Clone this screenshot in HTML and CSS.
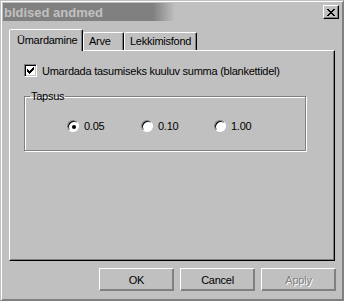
FILE: index.html
```html
<!DOCTYPE html>
<html>
<head>
<meta charset="utf-8">
<link rel="stylesheet" href="styles.css">
</head>
<body>
<div class="window">
  <div class="titlebar">
    <span class="title">bldised andmed</span>
    <span class="close">
      <svg width="8" height="7" viewBox="0 0 8 7"><path d="M0 0h2v1h1v1h2v-1h1v-1h2v1h-1v1h-1v1h-1v1h1v1h1v1h1v1h-2v-1h-1v-1h-2v1h-1v1h-2v-1h1v-1h1v-1h1v-1h-1v-1h-1v-1h-1z" fill="#000"/></svg>
    </span>
  </div>
  <div class="tabs">
    <div class="tab active">Ümardamine</div>
    <div class="tab">Arve</div>
    <div class="tab">Lekkimisfond</div>
  </div>
  <div class="panel">
    <label class="check-row">
      <span class="checkbox">
        <svg width="7" height="7" viewBox="0 0 7 7"><path d="M6 0h1v3h-1v1h-1v1h-1v1h-1v1h-1v-1h-1v-1h-1v-3h1v1h1v1h1v-1h1v-1h1v-1h1z" fill="#000"/></svg>
      </span>
      <span class="label">Umardada tasumiseks kuuluv summa (blankettidel)</span>
    </label>
    <fieldset class="group">
      <legend class="legend">Tapsus</legend>
      <div class="radios">
        <label class="radio-item">
          <span class="radio checked"></span><span class="label">0.05</span>
        </label>
        <label class="radio-item">
          <span class="radio"></span><span class="label">0.10</span>
        </label>
        <label class="radio-item">
          <span class="radio"></span><span class="label">1.00</span>
        </label>
      </div>
    </fieldset>
  </div>
  <div class="buttons">
    <div class="btn">OK</div>
    <div class="btn">Cancel</div>
    <div class="btn disabled">Apply</div>
  </div>
</div>
</body>
</html>
```
FILE: styles.css
```css
html, body {
  margin: 0;
  padding: 0;
  background: #c0c0c0;
}
.window {
  width: 344px;
  height: 301px;
  box-sizing: border-box;
  background: #c0c0c0;
  border: 1px solid;
  border-color: #c0c0c0 #808080 #808080 #c0c0c0;
  box-shadow: inset 1px 1px #fff, inset -1px -1px #808080;
  padding: 2px;
  font-family: "Liberation Sans", Arial, sans-serif;
  font-size: 11px;
  letter-spacing: -0.25px;
  color: #000;
}
.titlebar {
  height: 18px;
  display: flex;
  align-items: center;
  justify-content: space-between;
  background: linear-gradient(to right, #808080 0, #808080 150px, #c0c0c0 172px, #c0c0c0 100%);
  padding: 0 2px 0 1px;
}
.title {
  color: #c0c0c0;
  font-weight: bold;
  font-size: 13px;
  letter-spacing: 0;
}
.close {
  width: 16px;
  height: 14px;
  box-sizing: border-box;
  background: #c0c0c0;
  border: 1px solid;
  border-color: #fff #000 #000 #fff;
  box-shadow: inset -1px -1px #808080;
  display: flex;
  align-items: center;
  justify-content: center;
  padding-right: 1px;
}
.close svg { display: block; }
.tabs {
  display: flex;
  align-items: flex-end;
  margin: 8px 0 0 6px;
  height: 22px;
  position: relative;
  z-index: 1;
  margin-bottom: -1px;
}
.tab {
  box-sizing: border-box;
  height: 18px;
  margin-bottom: 1px;
  border: 1px solid;
  border-bottom: none;
  border-color: #fff #000 transparent #fff;
  box-shadow: inset -1px 0 #808080;
  border-radius: 2px 2px 0 0;
  padding: 2px 5px 0 5px;
  background: #c0c0c0;
}
.tab:nth-child(2) { width: 41px; }
.tab:nth-child(3) { width: 73px; }
.tab.active {
  height: 22px;
  margin-bottom: 0;
  width: 74px;
  padding: 4px 7px 0 7px;
}
.panel {
  width: 326px;
  height: 211px;
  box-sizing: border-box;
  margin-left: 6px;
  border: 1px solid;
  border-color: #fff #000 #000 #fff;
  box-shadow: inset -1px -1px #808080;
  padding: 13px 0 0 14px;
}
.check-row {
  display: flex;
  align-items: center;
  height: 13px;
}
.checkbox {
  width: 13px;
  height: 13px;
  box-sizing: border-box;
  background: #fff;
  border: 1px solid;
  border-color: #808080 #fff #fff #808080;
  box-shadow: inset 1px 1px #000, inset -1px -1px #c0c0c0;
  display: flex;
  align-items: center;
  justify-content: center;
  margin-right: 5px;
}
.checkbox svg { display: block; }
.group {
  margin: 13px 0 0 0;
  width: 282px;
  height: 61px;
  box-sizing: border-box;
  border: 1px solid #808080;
  box-shadow: inset 1px 1px #fff, 1px 1px #fff;
  padding: 0;
  position: relative;
}
.legend {
  padding: 0 1px;
  margin-left: 5px;
  line-height: 12px;
}
.radios {
  display: flex;
  padding: 18px 0 0 42px;
}
.radio-item {
  display: flex;
  align-items: center;
  height: 12px;
}
.radio-item:nth-child(1) { width: 74px; }
.radio-item:nth-child(2) { width: 73px; }
.radio {
  width: 12px;
  height: 12px;
  box-sizing: border-box;
  border-radius: 50%;
  background: #fff;
  border: 1px solid;
  border-color: #808080 #fff #fff #808080;
  box-shadow: inset 1px 1px #000;
  margin-right: 5px;
  display: flex;
  align-items: center;
  justify-content: center;
}
.radio.checked::after {
  content: "";
  width: 4px;
  height: 4px;
  border-radius: 50%;
  background: #000;
  margin: 1px 0 0 1px;
}
.buttons {
  display: flex;
  justify-content: flex-end;
  gap: 6px;
  margin: 7px 5px 0 0;
}
.btn {
  width: 75px;
  height: 23px;
  box-sizing: border-box;
  border: 1px solid;
  border-color: #fff #808080 #808080 #fff;
  box-shadow: inset -1px -1px #808080;
  display: flex;
  align-items: center;
  justify-content: center;
}
.btn.disabled {
  color: #808080;
  text-shadow: 1px 1px #fff;
}
```
